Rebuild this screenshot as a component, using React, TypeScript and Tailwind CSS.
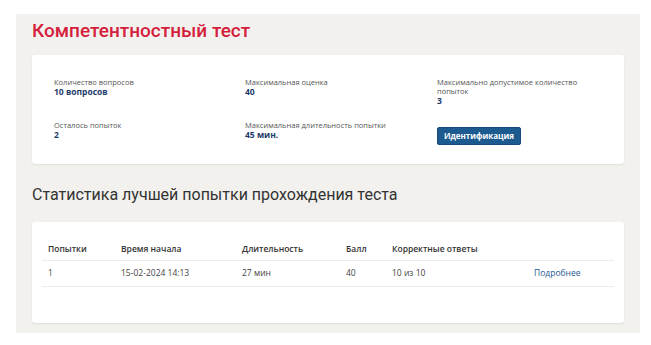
import React from "react";

const font = { fontFamily: '"Open Sans", "Noto Sans", sans-serif' };
const roboto = { fontFamily: 'Roboto, "Open Sans", sans-serif' };

function Info({ label, value }: { label: React.ReactNode; value: string }) {
  return (
    <div className="flex flex-col">
      <div className="text-[7.5px] leading-[9px] text-[#555]">{label}</div>
      <div className="text-[8.5px] leading-[10px] font-bold text-[#1d3a6a]">{value}</div>
    </div>
  );
}

export default function App() {
  const cols = "grid grid-cols-[73px_121px_104px_46px_142px_1fr]";
  return (
    <div className="w-[651px] h-[345px] bg-white pt-[14px] pl-[16px]" style={font}>
      <div className="w-[624px] h-[319px] bg-[#f2f1ee] px-4">
        <h1 className="h-[41px] text-[19px] leading-[34px] font-medium text-[#d51d3c]" style={roboto}>
          Компетентностный тест
        </h1>
        <div className="w-[592px] h-[109px] bg-white rounded-[3px] shadow-[0_1px_2px_rgba(0,0,0,0.08)] pl-[22px] pt-[23px]">
          <div className="grid grid-cols-[191px_192px_1fr] gap-y-[15px]">
            <Info label="Количество вопросов" value="10 вопросов" />
            <Info label="Максимальная оценка" value="40" />
            <Info
              label={
                <>
                  Максимально допустимое количество
                  <br />
                  попыток
                </>
              }
              value="3"
            />
            <Info label="Осталось попыток" value="2" />
            <Info label="Максимальная длительность попытки" value="45 мин." />
            <div>
              <button className="h-[18px] w-[84px] rounded-[2px] bg-[#1d5a8f] border border-[#174a78] text-white text-[8px] font-bold leading-none">
                Идентификация
              </button>
            </div>
          </div>
        </div>
        <h2 className="mt-[20px] h-[38px] text-[16px] leading-[22px] text-[#333] font-normal" style={roboto}>
          Статистика лучшей попытки прохождения теста
        </h2>
        <div className="w-[592px] h-[101px] bg-white rounded-[3px] shadow-[0_1px_2px_rgba(0,0,0,0.08)] px-[10px] pt-[16px]">
          <div className={`${cols} h-[23px] items-center border-b border-[#ececec] text-[8.5px] font-semibold text-[#333]`}>
            <div className="pl-[6px]">Попытки</div>
            <div className="pl-[6px]">Время начала</div>
            <div className="pl-[6px]">Длительность</div>
            <div className="pl-[6px]">Балл</div>
            <div className="pl-[6px]">Корректные ответы</div>
            <div />
          </div>
          <div className={`${cols} h-[26px] items-center border-b border-[#ececec] text-[8.5px] text-[#444]`}>
            <div className="pl-[6px]">1</div>
            <div className="pl-[6px]">15-02-2024 14:13</div>
            <div className="pl-[6px]">27 мин</div>
            <div className="pl-[6px]">40</div>
            <div className="pl-[6px]">10 из 10</div>
            <div className="pl-[6px] text-[#1f5a94]">Подробнее</div>
          </div>
        </div>
      </div>
    </div>
  );
}
